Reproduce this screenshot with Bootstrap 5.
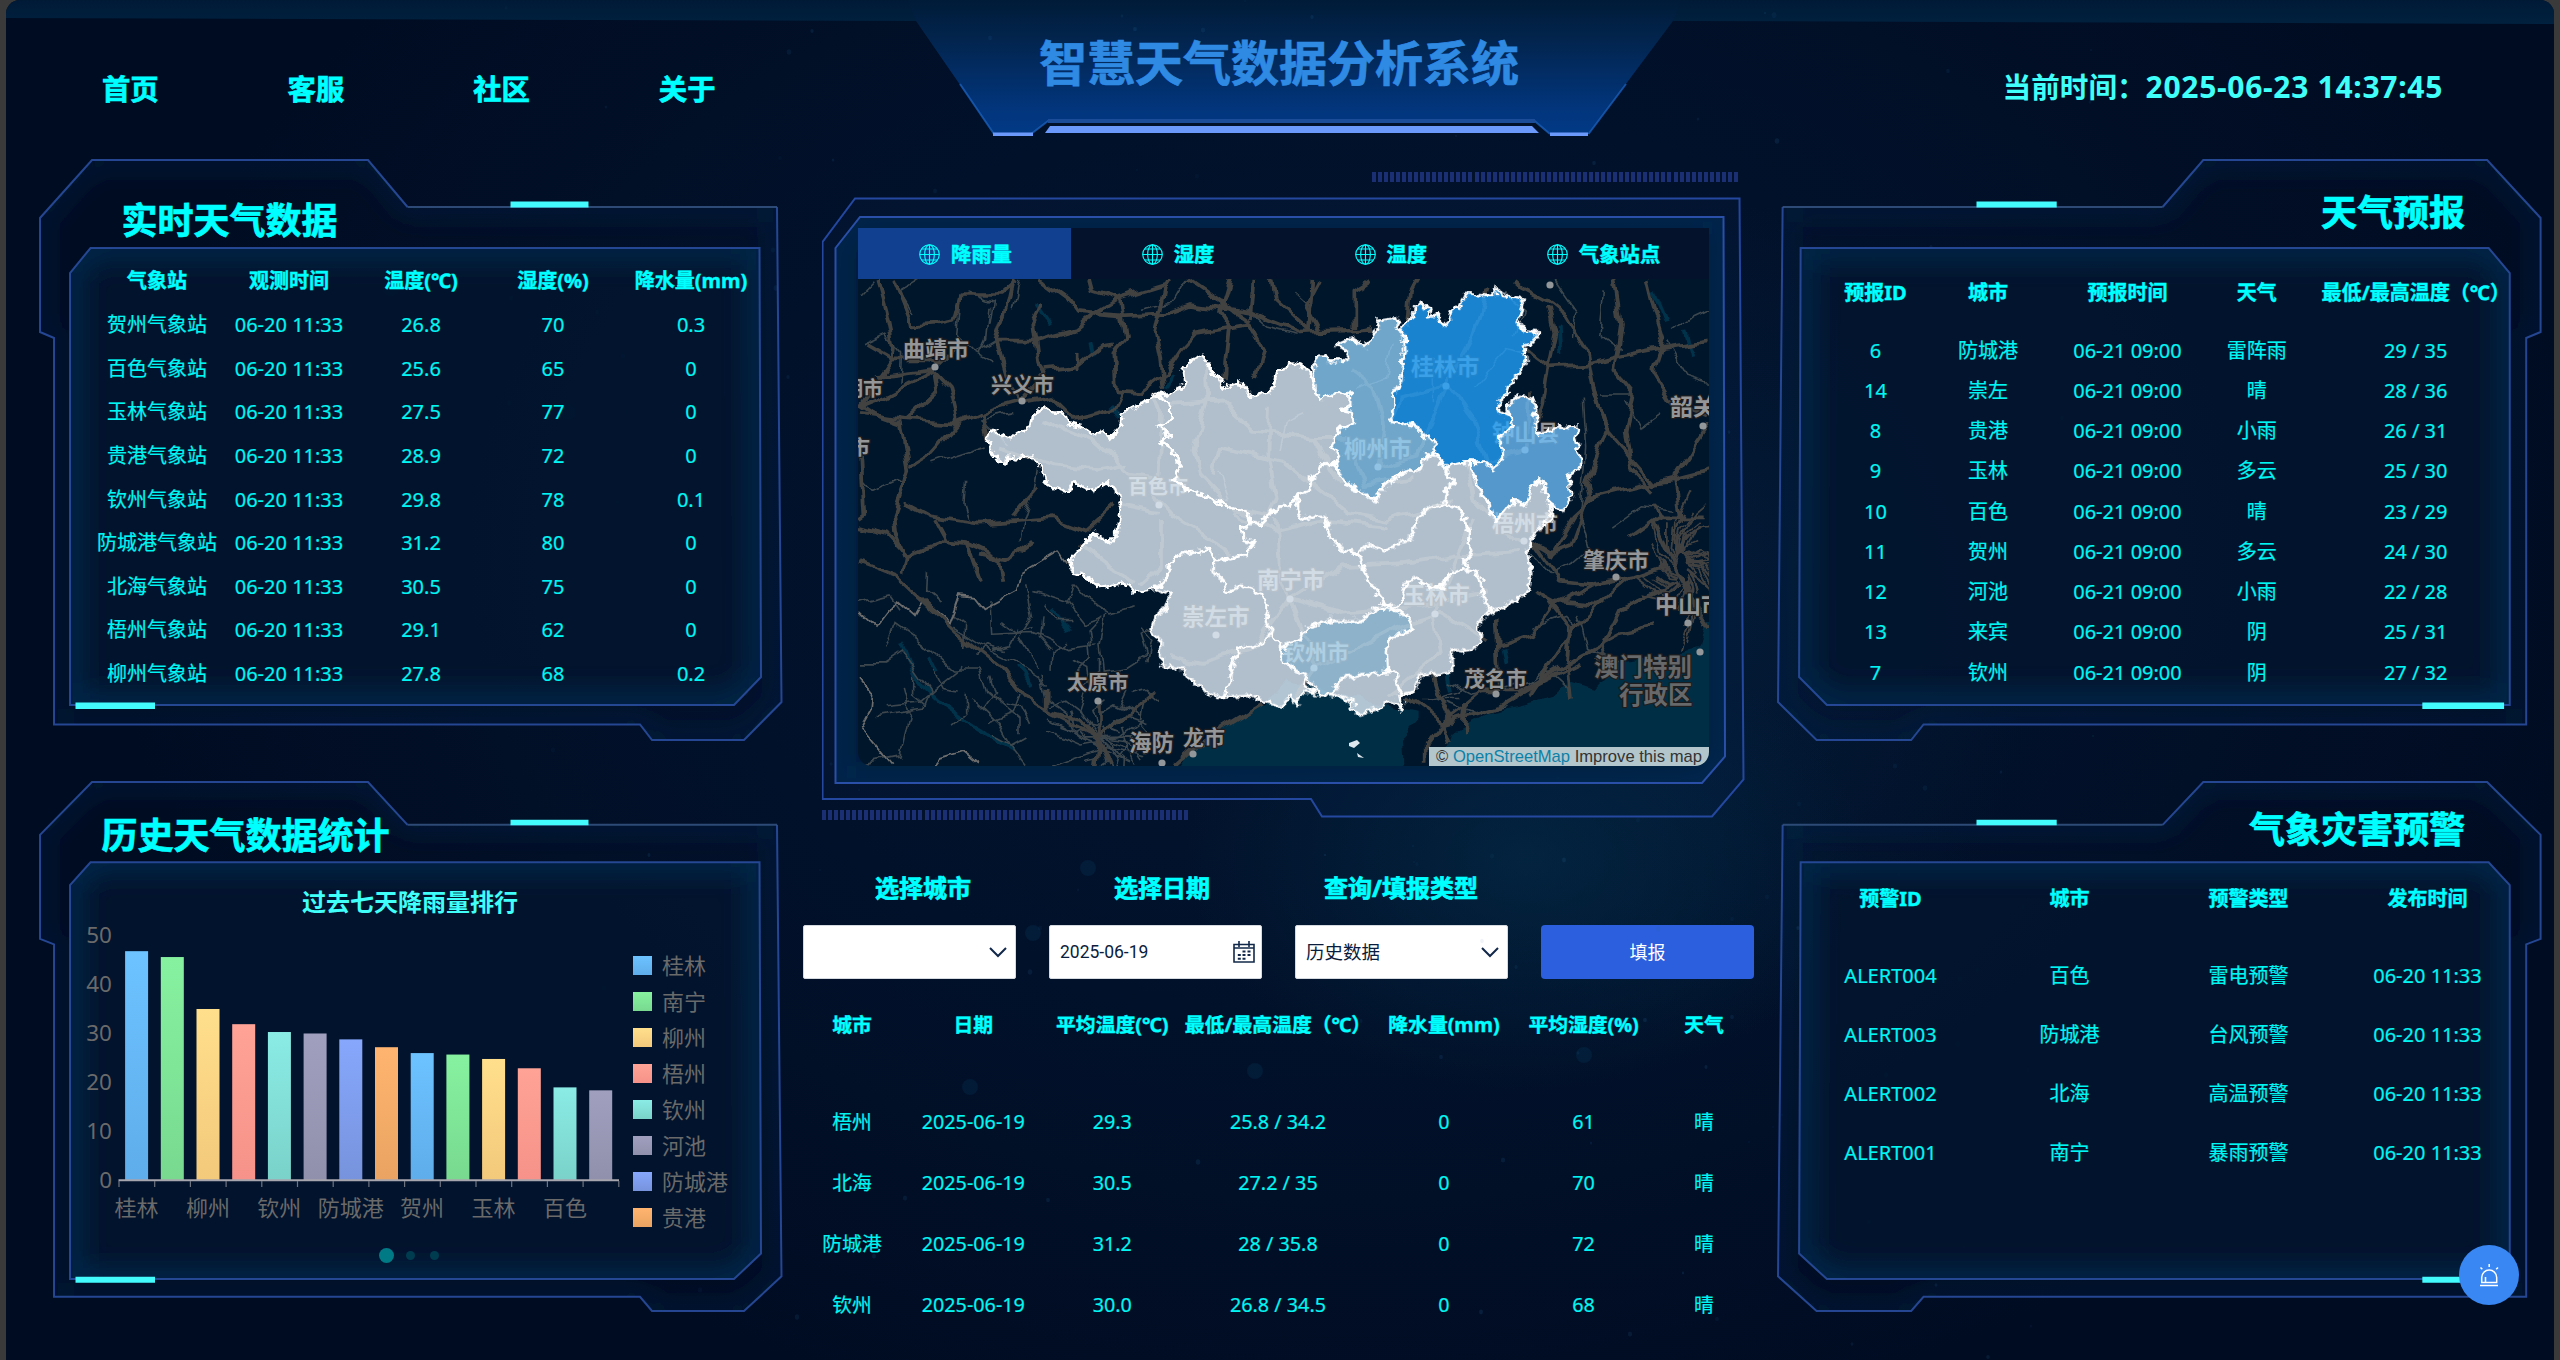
<!DOCTYPE html>
<html lang="zh-CN">
<head>
<meta charset="utf-8">
<title>智慧天气数据分析系统</title>
<link href="https://cdn.jsdelivr.net/npm/bootstrap@5.3.0/dist/css/bootstrap.min.css" rel="stylesheet">
<style>
:root{--cy:#00ffff}
body{margin:0;background:#3a3a3a;width:2560px;height:1360px;overflow:hidden;font-family:"Noto Sans","Noto Sans CJK SC",sans-serif;color:var(--cy)}
.screen{width:2548px;height:1360px;margin-left:6px;border-radius:14px 14px 0 0;position:relative;overflow:hidden;
 background:
 radial-gradient(ellipse 340px 230px at 1520px 860px,rgba(3,42,70,.7),rgba(3,42,70,0) 100%),
 radial-gradient(ellipse 330px 420px at 1700px 620px,rgba(4,46,78,.3),rgba(4,46,78,0) 100%),
 radial-gradient(ellipse 1250px 900px at 1350px 560px,#03142f 0,rgba(3,20,47,.6) 55%,rgba(0,12,33,0) 100%),#000c22}
.layer{position:absolute;inset:0;width:100%;height:100%;pointer-events:none}
.topbar{height:160px;position:relative;padding:0 111px 0 96px}
.topbar .navs{gap:129px}
.topbar .navs a{color:var(--cy);font-weight:700;font-size:28.3px;line-height:40px;text-decoration:none}
.heavy,.topbar a,.frame h2,.systitle,.lab{-webkit-text-stroke:.7px currentColor}
.systitle{position:absolute;left:0;right:0;top:28px;text-align:center;font-size:48px;line-height:70px;font-weight:700;color:#2f8ae4;margin:0;padding-right:2px}
.clock{font-weight:700;font-size:28.600px;line-height:40px;color:#40fffa}
.clock span{font-size:30px;letter-spacing:.7px}
.board{display:grid;grid-template-columns:741.5px 951px 762.6px;column-gap:21.5px;margin-left:34px}
.board>:nth-child(3){margin-left:2.5px}
.sidecol{gap:41.7px}
.frame{position:relative}
.f1{height:580px}.f2{height:529px}
.frame h2{font-size:36px;font-weight:700;margin:0;line-height:54px;position:relative}
.grid-t{--bs-table-bg:transparent;--bs-table-color:var(--cy);table-layout:fixed;position:relative;margin:0;color:var(--cy);font-size:20px;text-align:center;white-space:nowrap;line-height:26px}
.grid-t th,.grid-t td{padding:0!important;vertical-align:middle;color:var(--cy);overflow:visible}
.grid-t th{-webkit-text-stroke:.4px currentColor}
.grid-t td{color:#00f6f2;-webkit-text-stroke:.2px currentColor}
.grid-t tbody tr{height:var(--rh)}
.grid-t thead tr{height:var(--hh)}
.clipper{overflow:hidden}
.ticks{height:10px;width:366px;background:repeating-linear-gradient(90deg,#1a2f74 0 4px,transparent 4px 6.03px)}
.mapbox{position:relative;height:622px;padding:32px 0 0 36px}
.tabs-row{width:851px;height:51px;position:relative;background:#04122c}
.tabs-row button{flex:1;border:0;background:transparent;color:var(--cy);font-weight:700;font-size:20.300px;line-height:26px;gap:11px;border-radius:0;padding:1px 0 0 2px;-webkit-text-stroke:.5px currentColor}
.tabs-row button.active{background:#10408f}
.mapview{position:relative;width:851px;height:487px;background:#00162b;border-radius:0 0 14px 14px;overflow:hidden}
.credit{position:absolute;right:0;bottom:0;height:19px;width:280px;background:#b3c6cc;color:#333;font:16.600px/19px "Liberation Sans",sans-serif;white-space:nowrap;text-align:center}
.credit a{color:#0c81a8;text-decoration:none}
.lab{width:239px;text-align:center;font-size:24px;font-weight:700;line-height:36px;padding-left:1px}
.ctl{width:213px;height:54px;background:#fff;border:1px solid #d5d9e0;border-radius:2px;color:#0b1d3d;font-size:18.500px;padding:0 8px 0 10px}
.ctl .dt{font-family:Roboto,"Noto Sans CJK SC",sans-serif;font-size:17.500px;letter-spacing:0}
.go{width:213px;height:54px;border:0;border-radius:4px;background:#2b5fdd;color:#fff;font-size:18px}
.bell{position:absolute;left:2453px;top:1245px;width:60px;height:60px;border-radius:50%;background:#3887f3;border:0;padding:0}
</style>
</head>
<body>
<svg width="0" height="0" class="position-absolute">
 <defs>
  <filter id="glow" x="-5%" y="-5%" width="110%" height="110%"><feGaussianBlur stdDeviation="13"/></filter>
  <clipPath id="co"><path d="M92 160H368L407.500 207H777L781.500 702 744 740H652L640 724.500H54V338L40 332V218Z"/></clipPath>
  <clipPath id="ci"><path d="M90.500 248H759.500L761 677 734 705H70V273Z"/></clipPath>
  <symbol id="panel" viewBox="40 160 741.5 580" preserveAspectRatio="none" overflow="visible">
   <g clip-path="url(#co)"><path d="M92 160H368L407.500 207H777L781.500 702 744 740H652L640 724.500H54V338L40 332V218Z" fill="none" stroke="#06294c" stroke-opacity=".6" stroke-width="16" filter="url(#glow)"/></g>
   <g clip-path="url(#ci)"><path d="M90.500 248H759.500L761 677 734 705H70V273Z" fill="#02152f" fill-opacity=".85"/><path d="M90.500 248H759.500L761 677 734 705H70V273Z" fill="none" stroke="#082b52" stroke-opacity=".75" stroke-width="26" filter="url(#glow)"/></g>
   <g fill="none" stroke="#2b50a5" stroke-width="2" stroke-opacity=".85">
   <path vector-effect="non-scaling-stroke" d="M407.500 207 368 160H92L40 218V332L54 338V724.500H640L652 740H744L781.500 702 777 207"/>
   <path vector-effect="non-scaling-stroke" d="M407.500 207H777" stroke="#355383"/>
   <path vector-effect="non-scaling-stroke" d="M90.500 248H759.500L761 677 734 705H70V273Z"/></g>
   <path fill="#43fbfd" d="M510.500 201.500h78v6h-78zM75.500 702.500H155v6.500H75.500z"/>
  </symbol>
  <symbol id="globe" viewBox="0 0 20 20"><g fill="none" stroke="currentColor" stroke-width="1.1"><circle cx="10" cy="10" r="9.3"/><ellipse cx="10" cy="10" rx="4.600" ry="9.300"/><path d="M10 .7v18.600M.7 10h18.600M2.500 4.800h15M2.500 15.200h15"/></g></symbol>
 </defs>
</svg>

<div class="screen">
 <svg class="layer" viewBox="6 0 2548 1360" id="sky">
  <defs>
   <linearGradient id="hb" x1="0" x2="0" y1="0" y2="1"><stop offset="0" stop-color="#001a36"/><stop offset="1" stop-color="#00213f"/></linearGradient>
   <linearGradient id="tb" x1="0" x2="0" y1="0" y2="1"><stop offset="0" stop-color="#001b38"/><stop offset=".25" stop-color="#02234a"/><stop offset=".8" stop-color="#02357b"/><stop offset="1" stop-color="#023a86"/></linearGradient>
  </defs>
  <path fill="url(#hb)" d="M6 0H2554V24L1673 21H916L6 18Z"/>
  <path fill="url(#tb)" d="M908 0H1681L1673 21 1588.500 134H1550L1534.600 121H1048L1031 134H994L916 21Z"/>
  <path fill="none" stroke="#1c62bd" stroke-width="2" stroke-opacity=".75" d="M960 84 994 134M1031 134 1048 121H1534.600L1550 134M1588.500 134 1626 84"/>
  <path fill="none" stroke="#1a4c98" stroke-width="4" d="M1048 121H1535"/>
  <path fill="#6b98fb" d="M1050 126H1532L1539 133H1045ZM993 132.500h40v3.500h-40zM1550 132.500h38v3.500h-38z"/>
 </svg>

 <header class="topbar d-flex justify-content-between">
  <nav class="navs d-flex" style="padding-top:69px"><a href="#">首页</a><a href="#">客服</a><a href="#">社区</a><a href="#">关于</a></nav>
  <h1 class="systitle">智慧天气数据分析系统</h1>
  <div class="clock" style="padding-top:67px">当前时间：<span>2025-06-23 14:37:45</span></div>
 </header>

 <main class="board">
  <section class="sidecol d-flex flex-column">
   <div class="frame f1">
    <svg class="layer" overflow="visible"><use href="#panel" width="741.5" height="580"/></svg>
    <h2 style="padding:34px 0 0 81.500px">实时天气数据</h2>
    <div class="clipper" style="height:434px;margin:10.800px 0 0 51px"><table class="table table-borderless grid-t" id="live" style="width:672px;--hh:44.4px;--rh:43.65px"></table></div>
   </div>
   <div class="frame f2">
    <svg class="layer" overflow="visible"><use href="#panel" width="741.5" height="529"/></svg>
    <h2 style="padding:27px 0 0 61.500px">历史天气数据统计</h2>
    <svg id="chart" class="position-relative d-block" width="690" height="400" viewBox="70 870 690 400" style="margin:7.300px 0 0 30px"></svg>
   </div>
  </section>

  <section>
   <div style="padding:12px 0 0 19px">
    <div class="ticks" style="margin-left:550px"></div>
    <div class="mapbox" style="margin-top:14px">
     <svg class="layer" viewBox="822 196 932 622" preserveAspectRatio="none">
      <defs><clipPath id="cc"><path d="M860 217H1723.500L1725 756.500 1702 783H835.500V248Z"/></clipPath></defs>
      <path d="M855 198.500H1739.500L1743.500 779.500 1712 816.500H1322L1311 799H822.500V242Z" fill="#03244a" fill-opacity=".2" stroke="#2448a0" stroke-width="2"/>
      <g clip-path="url(#cc)"><path d="M860 217H1723.500L1725 756.500 1702 783H835.500V248Z" fill="#031b3a" stroke="#082f5c" stroke-width="14" filter="url(#glow)"/></g>
      <path d="M860 217H1723.500L1725 756.500 1702 783H835.500V248Z" fill="none" stroke="#2a4fa8" stroke-width="2"/>
     </svg>
     <div class="tabs-row d-flex">
      <button class="active d-flex align-items-center justify-content-center"><svg width="21" height="21"><use href="#globe"/></svg>降雨量</button>
      <button class="d-flex align-items-center justify-content-center"><svg width="21" height="21"><use href="#globe"/></svg>湿度</button>
      <button class="d-flex align-items-center justify-content-center"><svg width="21" height="21"><use href="#globe"/></svg>温度</button>
      <button class="d-flex align-items-center justify-content-center"><svg width="21" height="21"><use href="#globe"/></svg>气象站点</button>
     </div>
     <div class="mapview">
      <svg width="851" height="487" viewBox="0 0 851 487" class="d-block">
       <defs>
        <filter id="jag" x="0" y="0" width="851" height="487" filterUnits="userSpaceOnUse"><feTurbulence type="fractalNoise" baseFrequency=".13" numOctaves="3" seed="4" result="n"/><feDisplacementMap in="SourceGraphic" in2="n" scale="10" xChannelSelector="R" yChannelSelector="G"/></filter>
        <filter id="wob" x="0" y="0" width="851" height="487" filterUnits="userSpaceOnUse"><feTurbulence type="fractalNoise" baseFrequency=".045" numOctaves="2" seed="9" result="n"/><feDisplacementMap in="SourceGraphic" in2="n" scale="13" xChannelSelector="R" yChannelSelector="G"/></filter>
       </defs>
       <g filter="url(#wob)">
       <g transform="translate(-38 -9) scale(.33333 .35714)" id="base">
        <path fill="#012e45" d="M1070 1400 1110 1340 1215 1280 1290 1230 1340 1215 1400 1150 1500 1170 1600 1200 1740 1230 1790 1240 1790 1260 1740 1310 1745 1400ZM1870 1400 1900 1290 2000 1240 2140 1210 2200 1190 2250 1150 2330 1170 2400 1100 2560 1080 2640 1060 2660 980 2760 980 2760 1420Z"/>
        <g fill="none" stroke="#013049" stroke-width="4"><path vector-effect="non-scaling-stroke" d="M650 95 690 150M805 205 815 245M870 380 900 410M1060 290 1040 330M245 1045 300 1160 370 1220 430 1260 500 1300 580 1340M590 1110 640 1170M690 950 745 1010M330 1090 350 1130M2500 60 2540 150M2600 170 2620 240M2210 150 2215 230M1880 1130 1890 1180M2050 1060 2060 1100"/></g>
        <g id="minor" fill="none" stroke="#3d474d" stroke-width="1.6"></g>
        <g id="major" fill="none" stroke="#434241" stroke-width="3.7" stroke-linejoin="round"></g>
       </g></g>
       <g id="under"></g>
       <g filter="url(#jag)"><g id="areas" transform="translate(-38.500 -10) scale(.33333 .35714)" stroke="#fff" stroke-width="2.700" stroke-linejoin="round"></g></g>
       <path fill="#dfe8ee" d="M491 464l8-3 3 3-6 5-5-2zM499 474l7 5-6-1z"/>
      </svg>
      <div class="credit">© <a href="#">OpenStreetMap</a> Improve this map</div>
     </div>
    </div>
    <div class="ticks" style="margin-top:-8px;position:relative"></div>
   </div>
   <div class="d-flex" style="margin-top:50px"><div class="lab">选择城市</div><div class="lab">选择日期</div><div class="lab">查询/填报类型</div></div>
   <div class="d-flex justify-content-between" style="margin-top:19px">
    <div class="ctl d-flex align-items-center justify-content-end"><svg width="18" height="18" fill="none" stroke="#12284a" stroke-width="2"><path d="M1 5l8 8 8-8"/></svg></div>
    <div class="ctl d-flex align-items-center justify-content-between"><span class="dt">2025-06-19</span><svg width="22" height="23" style="margin-right:-2px" fill="none" stroke="#12284a" stroke-width="1.6"><path d="M1 3.500H21V21H1ZM1 7H21M6 0V6M16 0V6"/><g fill="#12284a" stroke="none"><path d="M9.500 9.500h3v2h-3zM14.500 9.500h3v2h-3zM4.800 13h3v2h-3zM9.500 13h3v2h-3zM14.500 13h3v2h-3zM4.800 16.800h3v2h-3zM9.500 16.800h3v2h-3z"/></g></svg></div>
    <div class="ctl d-flex align-items-center justify-content-between"><span>历史数据</span><svg width="18" height="18" fill="none" stroke="#12284a" stroke-width="2"><path d="M1 5l8 8 8-8"/></svg></div>
    <button class="go">填报</button>
   </div>
   <table class="table table-borderless grid-t" id="hist" style="width:954.800px;margin:13px 0 0 -3px;--hh:99.5px;--rh:61px;font-size:19.800px"></table>
  </section>

  <section class="sidecol d-flex flex-column">
   <div class="frame f1">
    <svg class="layer" overflow="visible"><g transform="translate(762.6 0) scale(-1 1)"><use href="#panel" width="762.6" height="580"/></g></svg>
    <h2 class="text-end" style="padding:26px 73px 0 0">天气预报</h2>
    <table class="table table-borderless grid-t" id="fore" style="width:718px;margin:15.400px 0 0 37px;--hh:75.2px;--rh:40.25px"></table>
   </div>
   <div class="frame f2">
    <svg class="layer" overflow="visible"><g transform="translate(762.6 0) scale(-1 1)"><use href="#panel" width="762.6" height="529"/></g></svg>
    <h2 class="text-end" style="padding:26.300px 73px 0 0;line-height:44px">气象灾害预警</h2>
    <table class="table table-borderless grid-t" id="warn" style="width:716px;margin-left:23px;--hh:94.4px;--rh:59.1px"></table>
   </div>
  </section>
 </main>
 <button class="bell"><svg width="22" height="24" viewBox="2478 1263 22 24" class="d-block mx-auto" fill="none" stroke="#fff" stroke-width="1.5"><path d="M2481.700 1282.500V1277.500a7.500 7.500 0 0 1 15 0v5ZM2480 1285.500H2498M2489.200 1264v3M2480.500 1267.500l1.800 1.800M2498 1267.500l-1.800 1.800M2485.500 1282V1277"/></svg></button>
</div>

<script>
const rows=(id,w,head,data,pb)=>{
 document.getElementById(id).innerHTML='<colgroup>'+w.map(x=>`<col style="width:${x}px">`).join('')+'</colgroup><thead><tr>'+head.map(h=>`<th${pb?` style="padding-bottom:${pb}px!important"`:''}>${h}</th>`).join('')+'</tr></thead><tbody>'+data.map(r=>'<tr>'+r.map(c=>`<td>${c}</td>`).join('')+'</tr>').join('')+'</tbody>';
};
rows('live',[132,132,132,132,144],['气象站','观测时间','温度(℃)','湿度(%)','降水量(mm)'],
 [['贺州',26.8,70,0.3],['百色',25.6,65,0],['玉林',27.5,77,0],['贵港',28.9,72,0],['钦州',29.8,78,0.1],['防城港','31.2',80,0],['北海',30.5,75,0],['梧州',29.1,62,0],['柳州',27.8,68,0.2]].map(r=>[r[0]+'气象站','06-20 11:33',r[1],r[2],r[3]]));
rows('fore',[121,104,175,83.4,234.6],['预报ID','城市','预报时间','天气','最低/最高温度（℃）'],
 [[6,'防城港','雷阵雨','29 / 35'],[14,'崇左','晴','28 / 36'],[8,'贵港','小雨','26 / 31'],[9,'玉林','多云','25 / 30'],[10,'百色','晴','23 / 29'],[11,'贺州','多云','24 / 30'],[12,'河池','小雨','22 / 28'],[13,'来宾','阴','25 / 31'],[7,'钦州','阴','27 / 32']].map(r=>[r[0],r[1],'06-21 09:00',r[2],r[3]]));
rows('warn',[179,179,179,179],['预警ID','城市','预警类型','发布时间'],
 [['ALERT004','百色','雷电预警'],['ALERT003','防城港','台风预警'],['ALERT002','北海','高温预警'],['ALERT001','南宁','暴雨预警']].map(r=>[...r,'06-20 11:33']));
rows('hist',[104,138.6,139.4,192,140,139.2,101.6],['城市','日期','平均温度(℃)','最低/最高温度（℃）','降水量(mm)','平均湿度(%)','天气'],
 [['梧州','29.3','25.8 / 34.2',61],['北海','30.5','27.2 / 35',70],['防城港','31.2','28 / 35.8',72],['钦州','30.0','26.8 / 34.5',68]].map(r=>[r[0],'2025-06-19',r[1],r[2],0,r[3],'晴']),33.5);

// bar chart
const pal=[['#6cc3ff','#5fadeb'],['#86f2a0','#78d98f'],['#ffdf8c','#f3c97b'],['#ffa396','#f69289'],['#8aece5','#7ad2ca'],['#a09fbe','#9190ac'],['#86a7fc','#7793dd'],['#ffb56f','#eaa362']];
const vals=[46.7,45.5,34.9,31.8,30.2,29.9,28.7,27.1,25.9,25.6,24.7,22.8,18.9,18.3];
let s='<defs>'+pal.map((p,i)=>`<linearGradient id="p${i}" x1="0" x2="0" y1="0" y2="1"><stop offset="0" stop-color="${p[0]}"/><stop offset="1" stop-color="${p[1]}"/></linearGradient>`).join('')+'</defs>';
s+='<text class="heavy" x="410" y="911" text-anchor="middle" font-size="24" font-weight="700" fill="#40fffa">过去七天降雨量排行</text><g font-size="22.500" fill="#6a6a6a">';
for(let i=0;i<6;i++)s+=`<text x="112" y="${1188-49*i}" text-anchor="end">${i*10}</text>`;
vals.forEach((v,i)=>s+=`<rect x="${(125.1+35.7*i).toFixed(1)}" y="${1180-v*4.9}" width="23" height="${v*4.9}" fill="url(#p${i%8})"/>`);
s+='<path d="M118.500 1180.300H619" stroke="#a7a5ad" stroke-width="2"/><path stroke="#6f7580" stroke-width="1.200" d="';
for(let i=0;i<15;i++)s+=`M${(119+35.7*i).toFixed(1)} 1181v6`;
s+='"/>';
['桂林','柳州','钦州','防城港','贺州','玉林','百色'].forEach((t,i)=>s+=`<text x="${136.5+71.4*i}" y="1215.500" text-anchor="middle" font-size="22">${t}</text>`);
['桂林','南宁','柳州','梧州','钦州','河池','防城港','贵港'].forEach((t,i)=>s+=`<rect x="633" y="${956+36*i}" width="19" height="19" fill="url(#p${i})"/><text x="662" y="${973.5+36*i}" font-size="22">${t}</text>`);
s+='</g><circle cx="386.500" cy="1255.500" r="7.500" fill="#007a85"/><circle cx="410.500" cy="1255.500" r="4.500" fill="#003c50"/><circle cx="434.500" cy="1255.500" r="4.500" fill="#003c50"/>';
document.getElementById('chart').innerHTML=s;

// map roads: x y pairs, shared grid for the whole view
const major=['175 25 200 110 220 200 215 250 120 380 150 400 240 430 265 560 220 680 225 740 250 800','225 25 270 130 275 155 340 150 400 140 420 70 540 70 590 30','140 210 215 250 330 250 365 260 420 210','165 300 250 290 340 280','120 380 200 350 345 280','345 285 390 330 415 430 340 510 270 550','345 285 355 340 260 420 120 400','480 400 410 430 240 420','600 370 540 385 485 405 505 470','600 370 690 355 760 420 880 390 905 340','605 375 560 300 530 195 650 195 770 165 830 120 900 80 1040 40 1050 25','530 195 560 110 580 25','670 95 640 150 655 260 680 290 600 370','660 25 740 80 770 120 900 130 1020 125 1110 95 1290 120 1440 175 1540 170 1665 165','810 25 820 60 900 85 915 190 880 230 885 340 960 345 1040 290 1090 220 1130 180 1290 155 1330 220 1310 300','1040 30 1005 180 1020 250 1030 330','1100 25 1230 110 1290 150','1230 25 1200 120 1230 160 1215 300','1300 25 1290 140','1355 25 1365 80 1470 170 1480 25','680 280 770 270 850 210 885 205','770 235 770 280','120 520 130 690 115 700','120 820 230 860 300 920 400 1010 540 1110 620 1200 700 1245 840 1310','250 650 330 690 480 710 700 695 800 730 890 655','650 610 580 690','120 720 200 740 260 800 250 850','345 700 380 760 440 765 480 870','260 800 380 755','480 800 560 815 640 760','440 765 540 810 550 870','840 1210 840 1310 1010 1180','680 1170 680 1240','840 1320 780 1260 700 1240','840 1320 870 1388','840 1310 830 1388','1060 1388 1130 1330 1250 1260 1330 1215','1050 375 1200 365 1300 450 1480 470 1560 600','1160 260 1165 365 1120 500 1140 570 1240 670 1350 690','670 420 820 480 930 570 1000 580','540 500 700 550 830 560 920 545','1000 350 1020 400 1010 640 1060 690 1170 750 1230 790','905 660 1010 680','1020 700 1020 830 960 880','780 770 870 830 950 870','1350 690 1370 640 1345 520 1350 380','1480 470 1580 470 1640 600 1780 580','1390 540 1580 680 1700 700 1900 650','1390 540 1200 500 1180 570','1240 680 1360 730 1500 700 1700 720','1410 920 1380 850 1370 700','1410 920 1560 830 1760 820 1900 800 2100 790','1410 920 1560 960 1800 940 2000 900','1410 920 1300 1060 1140 1100 1050 1080','1410 920 1490 1110 1420 1200','1490 1110 1600 1060 1720 1000 1860 960 2000 1040','1670 550 1690 440 1660 330 1590 280','1670 550 1790 520 1880 320 1960 180 2000 60','1880 320 1960 420 2000 540 2120 500 2130 340','1880 320 1740 360 1720 430','2110 765 2020 700 1960 640 1940 540','1840 960 1860 1070 1760 1150 1700 1190','1840 960 1960 700','1500 30 1460 100 1500 170 1600 170 1660 160','1600 160 1600 60 1650 30','1760 165 1770 60 1790 25','2080 25 2110 50 2190 90 2230 120 2300 230 2320 330 2360 450 2300 600 2310 640','2115 220 2190 270 2300 265 2400 240 2510 220 2660 200','2185 270 2170 370 2150 430','2180 100 2200 180 2180 270','2380 25 2400 150 2380 280 2440 350 2420 460 2440 560 2500 620','2480 25 2500 100 2530 190 2500 280 2560 370 2667 410','2667 430 2560 580 2580 690','2320 330 2360 450 2500 600 2667 560','2140 760 2190 790 2250 770 2300 640 2470 600 2580 590','2140 760 2220 870 2320 880 2440 860 2530 830','2190 800 2260 690 2330 630','2140 900 2200 930 2330 940 2430 860','2030 1055 2140 1020 2200 940 2320 880','2190 930 2250 1000 2240 1110 2250 1200','2030 970 2035 1100 2040 1180','1760 1195 1870 1270 1910 1240 1990 1180 2100 1180 2190 1130 2280 1080 2400 1020 2500 1000','1820 1388 1820 1330 1870 1270 2040 1220 2150 1160 2280 1100','1870 1270 1890 1320','1930 1300 1935 1210','1840 1130 1860 1190 1900 1270','2330 1090 2400 950 2520 900','2130 1190 2260 1010 2350 930','2500 700 2570 850 2667 1000','2520 690 2660 690','2430 750 2520 690 2500 660'];
const minor=['120 70 160 30','300 25 240 60 280 120','420 70 410 180 470 235 520 260','470 235 530 200','240 320 245 230 200 180 130 210','500 490 400 520 340 540','560 490 480 420 580 400','120 580 160 620 230 590 250 600','440 590 435 650 450 700','650 560 640 610 610 700 600 760','120 930 210 910 240 950','200 1060 225 990 330 1060 400 1120 480 1120','120 1100 200 1100 250 1070 330 1180 310 1230 170 1250','130 1380 240 1360 270 1240 250 1170','480 1120 500 1180 600 1260 600 1300','400 1000 500 1060 590 1100 680 1160','510 930 515 1020 640 1015 740 1060 830 1050','620 880 640 970 600 1030 650 1110','640 900 740 930 790 990 850 970','740 940 760 880 800 920 870 960 950 940','860 960 840 1050 850 1120 930 1110 980 1080','980 1080 960 1020 1000 1000','660 1130 680 1200 740 1240 760 1290','850 1120 920 1180 900 1220 960 1250','430 1110 350 1170 300 1210 200 1220','460 1200 540 1270 580 1340 620 1388','500 1270 580 1240 600 1190','680 1290 780 1330 900 1310 970 1260','690 1260 830 1330 980 1360','700 1388 840 1340 930 1380','760 1300 840 1330 840 1250','1100 25 1060 90 960 110','1280 110 1340 160 1430 180','510 100 500 200 480 240','440 60 520 90 510 150','600 25 580 110','1420 60 1480 110','2200 25 2270 120 2260 200','2350 60 2340 180 2400 220','2560 170 2620 130 2667 110','2540 200 2600 300 2667 320','2290 360 2300 500 2280 700 2310 800','2440 350 2340 350','2420 370 2460 440 2520 400','2380 720 2470 660 2560 670','2120 780 2190 850 2250 820 2300 780','2270 960 2300 1060 2400 1100','2140 1000 2240 970 2270 1000','1950 1170 1850 1200 1960 1240 2060 1220','1880 1150 1960 1190 2150 1150','1800 1200 1920 1200','2240 1170 2180 1120 2120 1160','1960 330 2060 220 2110 230','2050 60 2110 110 2080 180','1600 330 1700 300 1720 200','1840 370 1840 250','1200 560 1230 640 1180 640','1450 400 1400 420 1380 500'];
const bd=['115 960 165 1005 230 925 285 970 310 930 390 990 420 910 460 915 490 950 590 900 600 850 715 785 760 850','120 1140 155 1180 150 1230 120 1280 215 1388','345 1388 360 1370 430 1350 480 1388'];
let seed=7;const rnd=()=>(seed=(seed*16807)%2147483647)/2147483647;
const web=[];
for(let i=0;i<60;i++){const a=rnd()*6.3,r=40+rnd()*110,x=2585,y=840;web.push(`${x+Math.cos(a)*20} ${y+Math.sin(a)*40} ${x+Math.cos(a+.3)*r*.6} ${y+Math.sin(a+.3)*r} ${x+Math.cos(a+.7)*r} ${y+Math.sin(a+.7)*r*1.6}`)}
for(let i=0;i<14;i++){const a=rnd()*6.3,r=40+rnd()*60;minor.push(`840 1310 ${840+Math.cos(a)*r} ${1310+Math.sin(a)*r} ${840+Math.cos(a+.4)*r*1.6} ${1310+Math.sin(a+.4)*r*1.3}`)}
for(let i=0;i<26;i++){const x=300+rnd()*700,y=930+rnd()*380,a=rnd()*6.3;minor.push(`${x} ${y} ${x+50*Math.cos(a)} ${y+50*Math.sin(a)} ${x+95*Math.cos(a+.5)} ${y+95*Math.sin(a+.5)}`)}
const P=(l,x='')=>l.map(d=>`<path vector-effect="non-scaling-stroke" ${x} d="M${d}"/>`).join('');
document.getElementById('minor').innerHTML=P(minor)+P(bd,'stroke="#6c6c6c" stroke-width="1.8"');
document.getElementById('major').innerHTML=P(major)+P(web,'stroke-width="1.8"');

// place names
const names=[['曲靖市',45,70,22,77,88],['兴义市',133,105,21,164,122],['明市',-15,110,20],['市',-8,169,20],['百色市',270,208,20,301,226],['南宁市',399,301,22.5,432,320],['崇左市',324,338,22.5,358,356],['太原市',209,404,20.500,240,422],['海防',271,464,22.5,304,484],['龙市',325,458,21,335,475],['桂林市',553,88,22.8,588,107],['柳州市',486,170,22.5,520,188],['钟山县',634,154,22.3,667,171],['梧州市',634,244,22,666,262],['肇庆市',725,281,22,758,298],['玉林市',545,316,22.3,577,335],['钦州市',425,373,22,456,389],['茂名市',606,399,21,638,415],['中山市',797,326,23,830,344],['韶关市',812,128,23,845,147],['澳门特别',736,388,24.500],['行政区',761,416,24.500,842,373],['',0,0,1,692,6]];
document.getElementById('under').innerHTML='<g fill="#949698" stroke="#1d1d1f" stroke-width="2.500" paint-order="stroke" stroke-linejoin="round" font-weight="700">'+names.map(n=>`<text x="${n[1]}" y="${n[2]+n[3]*.36}" font-size="${n[3]}"${n[3]==24.5?' fill="#66686a"':''}>${n[0]}</text>`).join('')+'</g><g fill="#93979a">'+names.filter(n=>n[4]).map(n=>`<circle cx="${n[4]}" cy="${n[5]}" r="3.600"/>`).join('')+'</g>';

// prefecture areas: fill, x offset on the shared grid, outline
const areas=[
['#e3effb',0,'500 475 515 455 545 462 570 477 605 452 635 440 640 410 672 388 705 405 735 405 745 432 790 440 825 465 850 452 870 478 905 440 912 410 900 400 940 390 1010 350 1040 370 1060 420 1015 440 1050 465 1020 482 1050 500 1080 545 1065 590 1110 620 1170 640 1230 665 1280 680 1295 710 1268 725 1275 760 1305 768 1280 795 1230 815 1185 810 1170 785 1085 800 1045 830 1048 860 1010 895 940 905 915 880 840 890 790 855 760 850 755 810 790 775 825 742 865 765 895 735 905 660 895 620 860 600 820 622 760 598 745 625 700 612 680 600 668 560 640 525 590 530 563 525 560 550 530 530 515 500'],
['#e3effb',0,'1010 350 1050 348 1095 325 1090 280 1115 255 1148 243 1172 270 1175 290 1200 300 1210 335 1255 315 1295 358 1360 340 1370 290 1412 262 1450 275 1475 290 1488 340 1500 365 1540 350 1590 345 1592 380 1565 395 1595 400 1605 430 1560 450 1533 500 1560 520 1545 545 1505 545 1495 575 1475 590 1470 620 1435 630 1415 665 1380 665 1340 690 1325 715 1295 710 1280 680 1230 665 1170 640 1110 620 1065 590 1080 545 1050 500 1020 482 1050 465 1015 440 1060 420 1040 370'],
['#91cff9',1380,'105 290 100 275 118 240 138 240 145 258 195 260 205 225 165 215 215 195 260 215 285 175 300 145 350 138 360 170 375 195 378 230 370 255 365 315 340 350 338 425 375 432 410 440 430 465 465 480 462 510 440 525 425 560 375 570 330 595 300 620 290 650 270 645 235 615 205 605 180 575 165 545 180 520 153 500 180 450 225 430 215 400 185 395 212 380 210 345 160 350 120 365 108 340'],
['#24a3fe',1380,'365 170 385 140 400 135 405 105 420 97 450 110 445 135 475 130 490 155 510 140 520 110 545 100 555 70 620 75 645 75 652 52 670 75 730 85 715 150 735 175 780 178 755 210 735 215 738 265 720 295 690 320 685 345 650 380 660 400 695 415 700 440 660 475 670 520 660 545 640 560 620 540 570 540 540 545 500 555 480 535 465 520 465 480 430 465 410 440 375 432 338 425 340 350 365 315 370 255 378 230 375 195'],
['#6cbefa',1380,'685 400 685 380 722 355 755 362 770 385 770 440 775 465 800 460 830 440 900 445 885 470 905 530 905 550 868 580 870 610 880 635 850 675 815 665 810 640 790 620 800 600 778 590 755 610 750 640 740 660 705 645 650 705 635 690 625 650 595 620 590 590 570 555 570 540 620 540 640 560 660 545 670 520 660 475 700 440 695 415'],
['#e3effb',1380,'500 555 540 545 570 540 570 555 590 590 595 620 625 650 635 690 650 705 705 645 740 660 750 640 755 610 778 590 800 600 790 620 810 640 815 700 770 735 755 760 745 800 755 850 745 900 710 930 680 935 670 950 635 960 610 920 605 880 590 845 560 840 555 820 575 800 565 770 570 740 550 690 535 665 495 655 505 610 525 600 510 580'],
['#e3effb',1380,'165 545 180 575 205 605 235 615 270 645 290 650 300 620 330 595 375 570 425 560 440 525 462 515 480 535 500 555 510 580 525 600 505 610 495 655 450 665 415 695 395 755 360 765 320 790 265 770 235 800 180 780 150 745 135 690 110 690 70 705 55 670 55 630 90 620 95 590 115 575 125 545'],
['#e3effb',1380,'235 800 265 770 320 790 360 765 395 755 415 695 450 665 495 655 535 665 550 690 570 740 565 770 575 800 555 820 560 840 510 855 480 895 445 885 410 865 380 880 365 930 345 945 325 945 280 890 245 830'],
['#e3effb',1380,'325 945 345 945 365 930 380 880 410 865 445 885 480 895 510 855 560 840 590 845 605 880 610 920 635 960 600 985 595 1005 608 1035 580 1065 545 1070 515 1065 518 1130 480 1135 420 1135 405 1185 365 1195 350 1130 325 1130 320 1070 330 1030 385 1020 395 1000 380 970'],
['#b7dff9',1380,'0 1060 60 1040 85 1000 150 985 250 985 270 960 325 945 345 960 380 970 395 1000 385 1020 330 1030 320 1070 325 1130 250 1135 190 1145 150 1190 120 1190 100 1165 75 1140 50 1125 10 1095'],
['#e3effb',1380,'150 1190 190 1145 250 1135 350 1130 360 1195 370 1230 330 1210 300 1230 240 1245 205 1235 225 1215 190 1200'],
['#e3effb',0,'1360 1020 1380 1060 1390 1095 1430 1125 1460 1140 1455 1165 1490 1190 1450 1185 1430 1215 1415 1195 1385 1225 1340 1215 1290 1195 1215 1200 1230 1150 1250 1080 1260 1060 1320 1050'],
['#e3effb',0,'1170 785 1185 810 1180 850 1210 870 1220 905 1270 885 1330 915 1345 950 1340 990 1360 1020 1320 1050 1260 1060 1250 1080 1230 1150 1215 1200 1180 1195 1110 1150 1090 1120 1025 1110 1025 1040 997 1020 1010 965 1035 955 1052 910 1010 895 1048 860 1045 830 1085 800'],
['#e3effb',0,'1295 710 1325 715 1340 690 1380 665 1415 665 1435 630 1435 670 1450 705 1490 690 1515 690 1530 745 1560 780 1615 800 1625 830 1660 890 1705 945 1650 960 1630 985 1530 985 1465 1000 1440 1040 1380 1060 1360 1020 1340 990 1345 950 1330 915 1270 885 1220 905 1210 870 1180 850 1185 810 1230 815 1280 795 1305 768 1275 760 1268 725']];
document.getElementById('areas').innerHTML=areas.map(a=>`<path vector-effect="non-scaling-stroke" fill="${a[0]}" fill-opacity=".78" transform="translate(${a[1]} 0)" d="M${a[2]}Z"/>`).join('');

// faint stars over the backdrop
let st='';for(let i=0;i<150;i++){const x=500+rnd()*1600,y=rnd()*1360,r=.8+rnd()*1.6;st+=`<ellipse cx="${x|0}" cy="${y|0}" rx="${r.toFixed(1)}" ry="${(r*1.2).toFixed(1)}" fill="#2a6a9a" opacity="${(.06+rnd()*.14).toFixed(2)}"/>`}
[[970,1087],[1255,1071],[1584,1055],[1033,933],[1088,868],[391,288],[568,412]].forEach(p=>st+=`<circle cx="${p[0]}" cy="${p[1]}" r="8" fill="#0a5a80" opacity=".16"/>`);
document.getElementById('sky').insertAdjacentHTML('beforeend',st);
</script>
<script src="https://cdn.jsdelivr.net/npm/bootstrap@5.3.0/dist/js/bootstrap.bundle.min.js"></script>
</body>
</html>
